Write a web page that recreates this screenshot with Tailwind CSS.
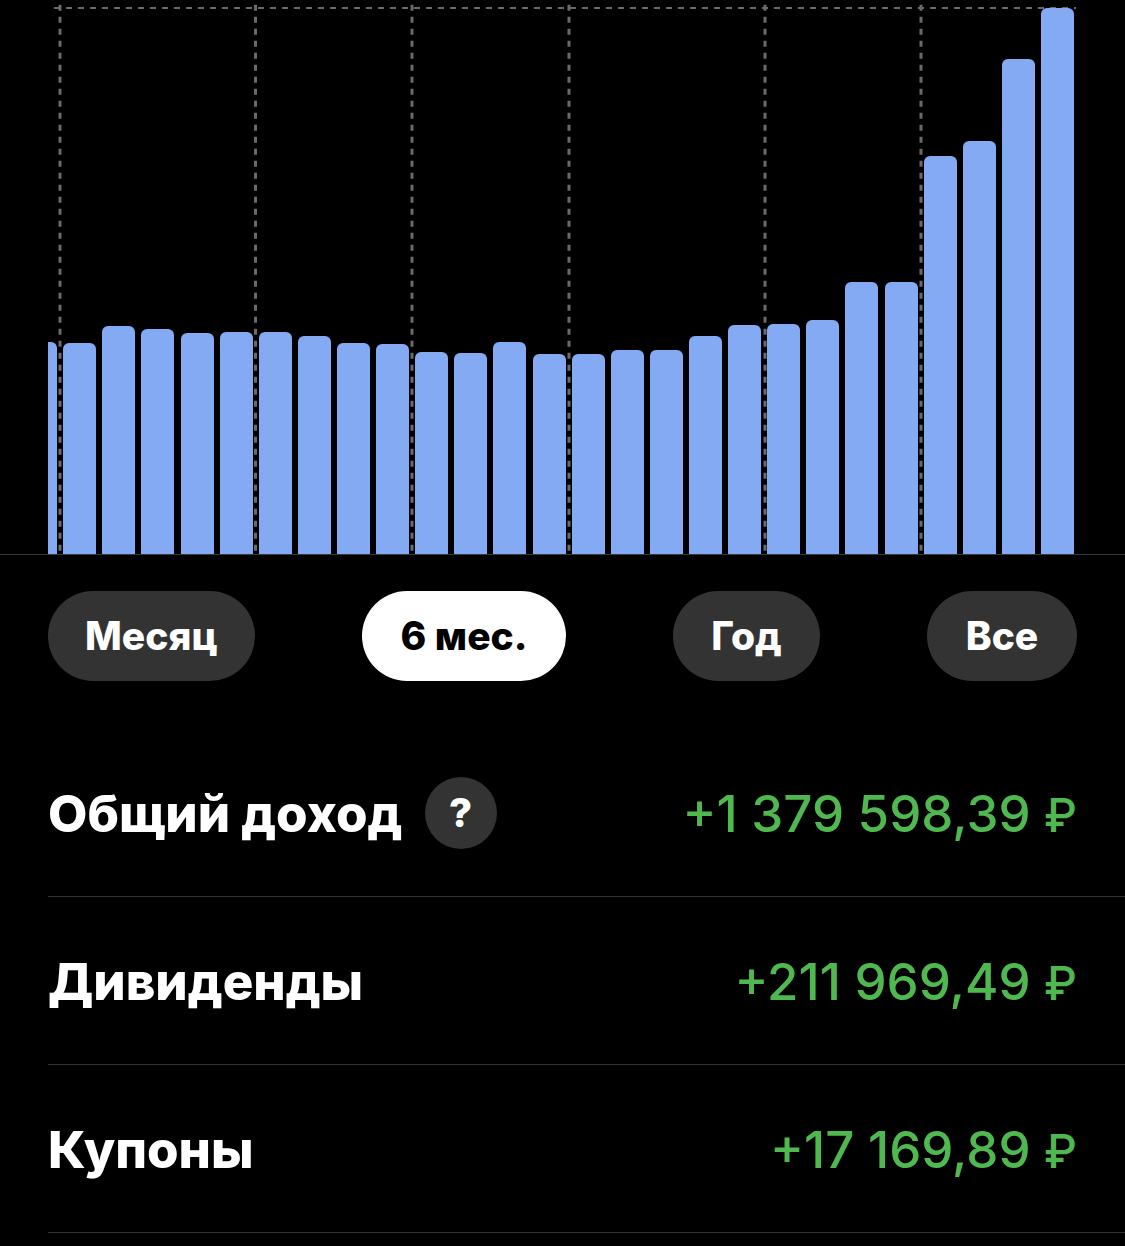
<!DOCTYPE html>
<html lang="ru">
<head>
  <meta charset="UTF-8">
  <title>Доход</title>
  <script src="https://cdn.jsdelivr.net/npm/@tailwindcss/browser@4"></script>
</head>
<body class="bg-black h-[1246px] overflow-hidden font-['Inter','Liberation_Sans',sans-serif] text-white">
  <!-- график -->
  <div class="relative h-[555px] border-b border-[#3a3a3a] overflow-hidden">
    <svg class="absolute inset-0" width="1125" height="554" fill="none" stroke="#6a6a6a" stroke-dasharray="6 6">
      <path stroke-width="2" d="M54 8H1076"/>
      <path stroke-width="3" d="M60 4.700V554M255.500 4.700V554M412 4.700V554M569 4.700V554M765 4.700V554M921 4.700V554"/>
    </svg>
    <div class="relative h-[554px] ml-[48px] w-[1026px] flex justify-end items-end gap-[6.120px] overflow-hidden">
      <div class="w-[33px] h-[212px] shrink-0 rounded-t-[6px] bg-[#85aaf4]"></div>
      <div class="w-[33px] h-[211px] shrink-0 rounded-t-[6px] bg-[#85aaf4]"></div>
      <div class="w-[33px] h-[228px] shrink-0 rounded-t-[6px] bg-[#85aaf4]"></div>
      <div class="w-[33px] h-[225px] shrink-0 rounded-t-[6px] bg-[#85aaf4]"></div>
      <div class="w-[33px] h-[221px] shrink-0 rounded-t-[6px] bg-[#85aaf4]"></div>
      <div class="w-[33px] h-[222px] shrink-0 rounded-t-[6px] bg-[#85aaf4]"></div>
      <div class="w-[33px] h-[222px] shrink-0 rounded-t-[6px] bg-[#85aaf4]"></div>
      <div class="w-[33px] h-[218px] shrink-0 rounded-t-[6px] bg-[#85aaf4]"></div>
      <div class="w-[33px] h-[211px] shrink-0 rounded-t-[6px] bg-[#85aaf4]"></div>
      <div class="w-[33px] h-[210px] shrink-0 rounded-t-[6px] bg-[#85aaf4]"></div>
      <div class="w-[33px] h-[202px] shrink-0 rounded-t-[6px] bg-[#85aaf4]"></div>
      <div class="w-[33px] h-[201px] shrink-0 rounded-t-[6px] bg-[#85aaf4]"></div>
      <div class="w-[33px] h-[212px] shrink-0 rounded-t-[6px] bg-[#85aaf4]"></div>
      <div class="w-[33px] h-[200px] shrink-0 rounded-t-[6px] bg-[#85aaf4]"></div>
      <div class="w-[33px] h-[200px] shrink-0 rounded-t-[6px] bg-[#85aaf4]"></div>
      <div class="w-[33px] h-[204px] shrink-0 rounded-t-[6px] bg-[#85aaf4]"></div>
      <div class="w-[33px] h-[204px] shrink-0 rounded-t-[6px] bg-[#85aaf4]"></div>
      <div class="w-[33px] h-[218px] shrink-0 rounded-t-[6px] bg-[#85aaf4]"></div>
      <div class="w-[33px] h-[229px] shrink-0 rounded-t-[6px] bg-[#85aaf4]"></div>
      <div class="w-[33px] h-[230px] shrink-0 rounded-t-[6px] bg-[#85aaf4]"></div>
      <div class="w-[33px] h-[234px] shrink-0 rounded-t-[6px] bg-[#85aaf4]"></div>
      <div class="w-[33px] h-[272px] shrink-0 rounded-t-[6px] bg-[#85aaf4]"></div>
      <div class="w-[33px] h-[272px] shrink-0 rounded-t-[6px] bg-[#85aaf4]"></div>
      <div class="w-[33px] h-[398px] shrink-0 rounded-t-[6px] bg-[#85aaf4]"></div>
      <div class="w-[33px] h-[413px] shrink-0 rounded-t-[6px] bg-[#85aaf4]"></div>
      <div class="w-[33px] h-[495px] shrink-0 rounded-t-[6px] bg-[#85aaf4]"></div>
      <div class="w-[33px] h-[546px] shrink-0 rounded-t-[6px] bg-[#85aaf4]"></div>
    </div>
  </div>

  <!-- период -->
  <div class="flex justify-between px-[48px] pt-[36px] pb-[48px] text-[39px] font-extrabold">
    <button class="h-[90px] w-[207px] rounded-full bg-[#333333]">Месяц</button>
    <button class="h-[90px] w-[204px] rounded-full bg-white text-black">6 мес.</button>
    <button class="h-[90px] w-[147px] rounded-full bg-[#333333]">Год</button>
    <button class="h-[90px] w-[150px] rounded-full bg-[#333333]">Все</button>
  </div>

  <!-- строки дохода -->
  <div class="ml-[48px]">
    <div class="h-[168px] flex items-center justify-between pr-[48px] border-b border-[#333333]">
      <div class="flex items-center gap-[22px]">
        <span class="pt-[4px] text-[51px] font-extrabold">Общий доход</span>
        <span class="w-[72px] h-[72px] rounded-full bg-[#333333] flex items-center justify-center text-[40px] font-extrabold">?</span>
      </div>
      <span class="pt-[4px] text-[51px] font-[550] text-[#4fb84f]">+1 379 598,39 <span class="text-[46px]">₽</span></span>
    </div>
    <div class="h-[168px] flex items-center justify-between pr-[48px] border-b border-[#333333]">
      <span class="pt-[4px] text-[51px] font-extrabold">Дивиденды</span>
      <span class="pt-[4px] text-[51px] font-[550] text-[#4fb84f]">+211 969,49 <span class="text-[46px]">₽</span></span>
    </div>
    <div class="h-[168px] flex items-center justify-between pr-[48px] border-b border-[#333333]">
      <span class="pt-[4px] text-[51px] font-extrabold">Купоны</span>
      <span class="pt-[4px] text-[51px] font-[550] text-[#4fb84f]">+17 169,89 <span class="text-[46px]">₽</span></span>
    </div>
  </div>
</body>
</html>
